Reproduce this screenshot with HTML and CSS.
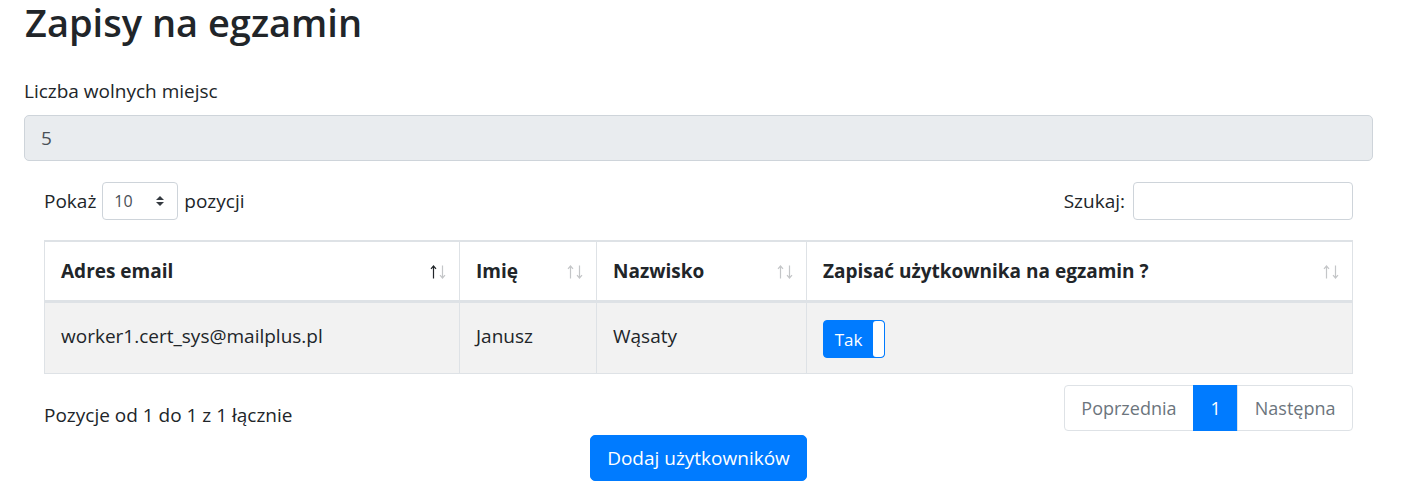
FILE: index.html
```html
<!DOCTYPE html>
<html lang="pl">
<head>
<meta charset="utf-8">
<title>Zapisy na egzamin</title>
<link rel="stylesheet" href="styles.css">
</head>
<body>
<main class="page">
  <h1 class="title">Zapisy na egzamin</h1>
  <div class="field">
    <label class="field-label" for="seats">Liczba wolnych miejsc</label>
    <input id="seats" class="field-input" type="text" value="5" readonly>
  </div>
  <div class="dt-wrapper">
    <div class="dt-top">
      <div class="dt-length">
        <span>Pokaż</span>
        <span class="dt-select"><span>10</span>
          <svg class="select-arrows" width="8" height="10" viewBox="0 0 4 5"><path d="M2 0L0 2h4zm0 5L0 3h4z" fill="#343a40"/></svg>
        </span>
        <span>pozycji</span>
      </div>
      <label class="dt-filter"><span>Szukaj:</span><input type="search" class="dt-search"></label>
    </div>
    <table class="dt-table">
      <colgroup>
        <col class="col-email">
        <col class="col-name">
        <col class="col-surname">
        <col>
      </colgroup>
      <thead>
        <tr>
          <th><div class="th-in"><span>Adres email</span>
            <svg class="sort" width="16" height="14" viewBox="0 0 16 14"><path d="M3.5 13.5V1M1 3.8L3.5 1 6 3.8" fill="none" stroke="#212529" stroke-width="1.2"/><path d="M12.5 0.5V13M10 10.2l2.5 2.8 2.5-2.8" fill="none" stroke="#c4c6c8" stroke-width="1.2"/></svg>
          </div></th>
          <th><div class="th-in"><span>Imię</span>
            <svg class="sort" width="16" height="14" viewBox="0 0 16 14"><path d="M3.5 13.5V1M1 3.8L3.5 1 6 3.8" fill="none" stroke="#c4c6c8" stroke-width="1.2"/><path d="M12.5 0.5V13M10 10.2l2.5 2.8 2.5-2.8" fill="none" stroke="#c4c6c8" stroke-width="1.2"/></svg>
          </div></th>
          <th><div class="th-in"><span>Nazwisko</span>
            <svg class="sort" width="16" height="14" viewBox="0 0 16 14"><path d="M3.5 13.5V1M1 3.8L3.5 1 6 3.8" fill="none" stroke="#c4c6c8" stroke-width="1.2"/><path d="M12.5 0.5V13M10 10.2l2.5 2.8 2.5-2.8" fill="none" stroke="#c4c6c8" stroke-width="1.2"/></svg>
          </div></th>
          <th><div class="th-in"><span>Zapisać użytkownika na egzamin ?</span>
            <svg class="sort" width="16" height="14" viewBox="0 0 16 14"><path d="M3.5 13.5V1M1 3.8L3.5 1 6 3.8" fill="none" stroke="#c4c6c8" stroke-width="1.2"/><path d="M12.5 0.5V13M10 10.2l2.5 2.8 2.5-2.8" fill="none" stroke="#c4c6c8" stroke-width="1.2"/></svg>
          </div></th>
        </tr>
      </thead>
      <tbody>
        <tr>
          <td>worker1.cert_sys@mailplus.pl</td>
          <td>Janusz</td>
          <td>Wąsaty</td>
          <td class="cell-toggle"><span class="toggle"><span class="toggle-label">Tak</span><span class="toggle-handle"></span></span></td>
        </tr>
      </tbody>
    </table>
    <div class="dt-bottom">
      <div class="dt-info">Pozycje od 1 do 1 z 1 łącznie</div>
      <ul class="pager">
        <li class="pager-item disabled"><span class="pager-link">Poprzednia</span></li>
        <li class="pager-item active"><span class="pager-link">1</span></li>
        <li class="pager-item disabled"><span class="pager-link">Następna</span></li>
      </ul>
    </div>
  </div>
  <div class="actions"><button class="btn-primary" type="button">Dodaj użytkowników</button></div>
</main>
</body>
</html>
```
FILE: styles.css
```css
* { box-sizing: border-box; }
html, body { margin: 0; }
body {
  font-family: "Open Sans", "Noto Sans", sans-serif;
  font-size: 19px;
  line-height: 29px;
  color: #212529;
  background: #fff;
}
.page { padding: 0 40px 0 24px; }
.title {
  margin: 0 0 32px 1px;
  font-size: 38px;
  line-height: 45px;
  font-weight: 600;
}
.field-label { display: block; margin-bottom: 9px; }
.field-input {
  display: block;
  width: 100%;
  height: 46px;
  padding: 0 16px;
  border: 1px solid #ced4da;
  border-radius: 5px;
  background: #e9ecef;
  color: #495057;
  font: inherit;
  outline: none;
}
.dt-wrapper { padding: 0 20px; margin-top: 21px; }
.dt-top {
  display: flex;
  justify-content: space-between;
  align-items: center;
  height: 38px;
}
.dt-length { display: flex; align-items: center; gap: 6px; }
.dt-select {
  display: inline-flex;
  align-items: center;
  justify-content: space-between;
  width: 76px;
  height: 38px;
  padding: 0 13px 0 11px;
  border: 1px solid #ced4da;
  border-radius: 4px;
  font-size: 16px;
  color: #495057;
}
.dt-filter { display: flex; align-items: center; gap: 8px; }
.dt-search {
  width: 220px;
  height: 38px;
  border: 1px solid #ced4da;
  border-radius: 4px;
  font: inherit;
}
.dt-table {
  width: 100%;
  margin-top: 20px;
  border: 1px solid #dee2e6;
  border-spacing: 0;
  table-layout: fixed;
}
.col-email { width: 415px; }
.col-name { width: 137px; }
.col-surname { width: 210px; }
.dt-table th {
  border-top: 1px solid #dee2e6;
  border-bottom: 2px solid #dee2e6;
  border-right: 1px solid #dee2e6;
  padding: 15px 13px 14px 16px;
  text-align: left;
  font-weight: 700;
  vertical-align: middle;
  background: #fff;
}
.th-in { display: flex; align-items: center; justify-content: space-between; }
.sort { flex: none; }
.dt-table td {
  border-top: 1px solid #dee2e6;
  border-right: 1px solid #dee2e6;
  padding: 19px 16px 13px;
  vertical-align: top;
  background: #f2f2f2;
}
.dt-table td.cell-toggle { padding: 17px 16px 15px; }
.dt-table th:last-child, .dt-table td:last-child { border-right: 0; }
.toggle {
  display: flex;
  width: 62px;
  height: 38px;
  background: #007bff;
  border: 1px solid #007bff;
  border-radius: 4px;
  overflow: hidden;
}
.toggle-label {
  flex: 1;
  display: flex;
  align-items: center;
  justify-content: center;
  color: #fff;
  font-size: 17px;
}
.toggle-handle { width: 11px; background: #fff; border-radius: 3px; }
.dt-bottom {
  display: flex;
  justify-content: space-between;
  align-items: flex-start;
  margin-top: 11px;
}
.dt-info { padding-top: 16px; }
.pager { display: flex; list-style: none; margin: 0; padding: 0; font-size: 18px; }
.pager-link {
  display: block;
  height: 46px;
  padding: 0 16.5px;
  line-height: 44px;
  border: 1px solid #dee2e6;
  color: #6c757d;
  background: #fff;
}
.pager-item + .pager-item .pager-link { margin-left: -1px; }
.pager-item:first-child .pager-link { border-radius: 4px 0 0 4px; }
.pager-item:last-child .pager-link { border-radius: 0 4px 4px 0; }
.pager-item.active .pager-link { background: #007bff; border-color: #007bff; color: #fff; }
.actions { display: flex; justify-content: center; margin-top: 4px; }
.btn-primary {
  height: 46px;
  padding: 0 16px;
  border: 1px solid #007bff;
  border-radius: 5px;
  background: #007bff;
  color: #fff;
  font: inherit;
}
```
